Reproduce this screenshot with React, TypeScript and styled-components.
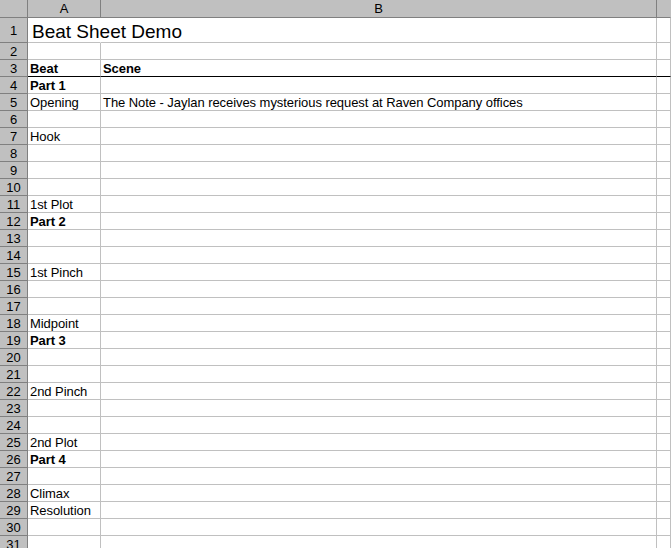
import React from "react";
import styled, { createGlobalStyle } from "styled-components";

const Global = createGlobalStyle`
  html, body { margin: 0; padding: 0; background: #ffffff; }
  body { font-family: "Liberation Sans", Arial, sans-serif; overflow: hidden; }
`;

const COLS = "28px 73px 556px 1fr";

const Sheet = styled.div`
  width: 671px;
  height: 548px;
  overflow: hidden;
  background: #ffffff;
  display: flex;
  flex-direction: column;
`;

const Row = styled.div<{ $h: number }>`
  display: grid;
  grid-template-columns: ${COLS};
  height: ${(p) => p.$h}px;
  flex: 0 0 auto;
`;

const ColHeader = styled.div<{ $last?: boolean }>`
  background: #c0c0c0;
  border-right: 1px solid ${(p) => (p.$last ? "#c0c0c0" : "#808080")};
  border-bottom: 1px solid #808080;
  display: flex;
  align-items: center;
  justify-content: center;
  font-size: 13px;
  color: #000;
  box-sizing: border-box;
`;

const RowHeader = styled.div`
  background: #c0c0c0;
  border-right: 1px solid #808080;
  border-bottom: 1px solid #808080;
  display: flex;
  align-items: center;
  justify-content: center;
  font-size: 13px;
  line-height: 15px;
  padding-top: 1px;
  color: #000;
  box-sizing: border-box;
`;

const Cell = styled.div<{
  $bold?: boolean;
  $title?: boolean;
  $noRight?: boolean;
  $rule?: boolean;
}>`
  border-right: 1px solid ${(p) => (p.$noRight ? "transparent" : "#c0c0c0")};
  border-bottom: 1px solid ${(p) => (p.$rule ? "#000000" : "#c0c0c0")};
  box-sizing: border-box;
  display: flex;
  align-items: flex-end;
  padding: 0 0 0 ${(p) => (p.$title ? "4px" : "2px")};
  font-size: ${(p) => (p.$title ? "19px" : "13px")};
  line-height: ${(p) => (p.$title ? "20px" : "15px")};
  letter-spacing: ${(p) => (p.$title ? "0" : "-0.06px")};
  font-weight: ${(p) => (p.$bold ? 700 : 400)};
  color: #000;
  white-space: nowrap;
  overflow: visible;
  min-width: 0;
`;

type Line = { a?: string; b?: string; bold?: boolean };

const lines: Line[] = [
  { a: "Part 1", bold: true },
  { a: "Opening", b: "The Note - Jaylan receives mysterious request at Raven Company offices" },
  {},
  { a: "Hook" },
  {},
  {},
  {},
  { a: "1st Plot" },
  { a: "Part 2", bold: true },
  {},
  {},
  { a: "1st Pinch" },
  {},
  {},
  { a: "Midpoint" },
  { a: "Part 3", bold: true },
  {},
  {},
  { a: "2nd Pinch" },
  {},
  {},
  { a: "2nd Plot" },
  { a: "Part 4", bold: true },
  {},
  { a: "Climax" },
  { a: "Resolution" },
  {},
  {},
];

export default function App() {
  return (
    <>
      <Global />
      <Sheet>
        <Row $h={18}>
          <ColHeader />
          <ColHeader>A</ColHeader>
          <ColHeader>B</ColHeader>
          <ColHeader $last />
        </Row>
        <Row $h={25}>
          <RowHeader>1</RowHeader>
          <Cell $title $noRight>Beat Sheet Demo</Cell>
          <Cell />
          <Cell />
        </Row>
        <Row $h={17}>
          <RowHeader>2</RowHeader>
          <Cell />
          <Cell />
          <Cell />
        </Row>
        <Row $h={17}>
          <RowHeader>3</RowHeader>
          <Cell $bold $rule>Beat</Cell>
          <Cell $bold $rule>Scene</Cell>
          <Cell $rule />
        </Row>
        {lines.map((l, i) => (
          <Row $h={17} key={i}>
            <RowHeader>{i + 4}</RowHeader>
            <Cell $bold={l.bold}>{l.a}</Cell>
            <Cell>{l.b}</Cell>
            <Cell />
          </Row>
        ))}
      </Sheet>
    </>
  );
}
